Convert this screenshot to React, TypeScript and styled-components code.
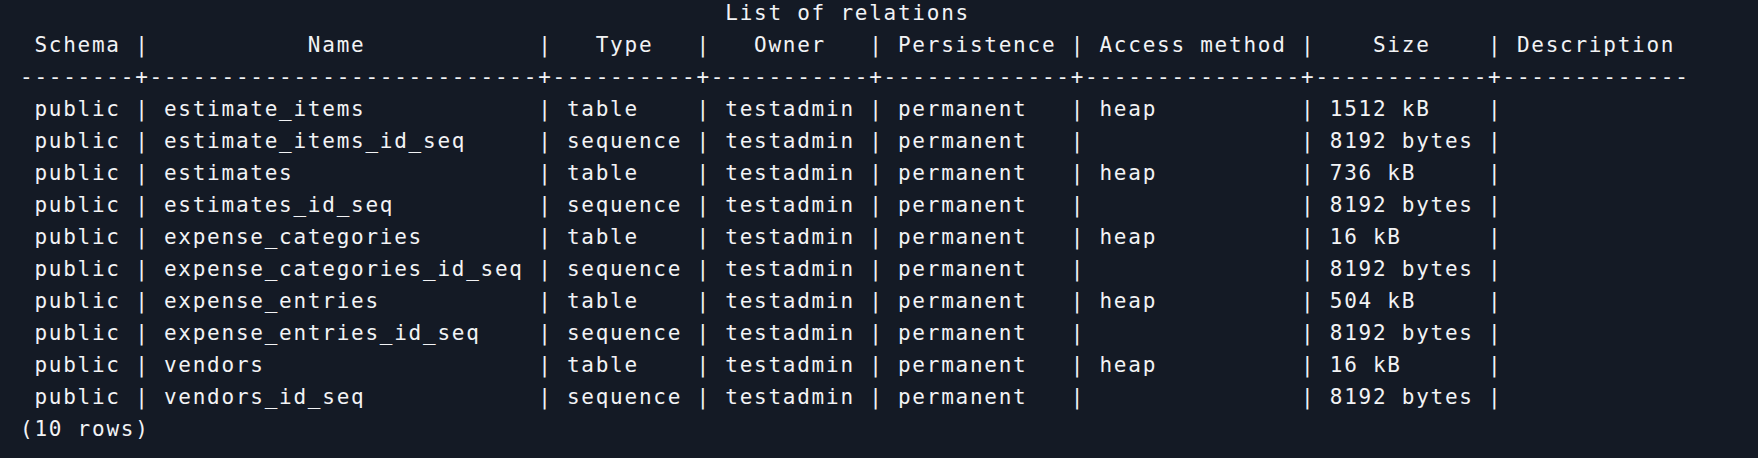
import React from "react";
import styled, { createGlobalStyle } from "styled-components";

const GlobalStyle = createGlobalStyle`
  html, body {
    margin: 0;
    padding: 0;
    background: #141a25;
  }
  body {
    width: 1758px;
    height: 458px;
    overflow: hidden;
  }
`;

const Terminal = styled.div`
  box-sizing: border-box;
  width: 1758px;
  height: 458px;
  background: #141a25;
  padding: 0 0 0 20px;
  overflow: hidden;
  font-family: "DejaVu Sans Mono", "Liberation Mono", monospace;
  font-size: 21px;
  letter-spacing: 1.75px;
  line-height: 32px;
  color: #f2f3f5;
`;

const Output = styled.div`
  display: flex;
  flex-direction: column;
  margin-top: -3px;
`;

const Line = styled.div`
  white-space: pre;
  height: 32px;
`;

const TitleLine = styled(Line)``;
const HeaderLine = styled(Line)``;
const DividerLine = styled(Line)``;
const RowLine = styled(Line)``;
const FooterLine = styled(Line)``;

type Col = { title: string; width: number };

const columns: Col[] = [
  { title: "Schema", width: 6 },
  { title: "Name", width: 25 },
  { title: "Type", width: 8 },
  { title: "Owner", width: 9 },
  { title: "Persistence", width: 11 },
  { title: "Access method", width: 13 },
  { title: "Size", width: 10 },
  { title: "Description", width: 11 },
];

type Rel = { name: string; type: string; method: string; size: string };

const relations: Rel[] = [
  { name: "estimate_items", type: "table", method: "heap", size: "1512 kB" },
  { name: "estimate_items_id_seq", type: "sequence", method: "", size: "8192 bytes" },
  { name: "estimates", type: "table", method: "heap", size: "736 kB" },
  { name: "estimates_id_seq", type: "sequence", method: "", size: "8192 bytes" },
  { name: "expense_categories", type: "table", method: "heap", size: "16 kB" },
  { name: "expense_categories_id_seq", type: "sequence", method: "", size: "8192 bytes" },
  { name: "expense_entries", type: "table", method: "heap", size: "504 kB" },
  { name: "expense_entries_id_seq", type: "sequence", method: "", size: "8192 bytes" },
  { name: "vendors", type: "table", method: "heap", size: "16 kB" },
  { name: "vendors_id_seq", type: "sequence", method: "", size: "8192 bytes" },
];

const center = (s: string, w: number) => {
  const left = Math.floor((w - s.length) / 2);
  return " ".repeat(left) + s + " ".repeat(w - s.length - left);
};

const totalWidth = columns.reduce((a, c) => a + c.width + 2, 0) + columns.length - 1;

const titleText = "List of relations";
const titleLine = " ".repeat(Math.floor((totalWidth - titleText.length) / 2)) + titleText;

const headerLine = columns
  .map((c, i) => {
    const cell = " " + center(c.title, c.width);
    return i === columns.length - 1 ? cell : cell + " ";
  })
  .join("|");

const dividerLine = columns.map((c) => "-".repeat(c.width + 2)).join("+");

const rowText = (r: Rel) => {
  const vals = ["public", r.name, r.type, "testadmin", "permanent", r.method, r.size, ""];
  return vals
    .map((v, i) => {
      const cell = " " + v.padEnd(columns[i].width, " ");
      return i === vals.length - 1 ? " " : cell + " ";
    })
    .join("|");
};

export default function App() {
  return (
    <>
      <GlobalStyle />
      <Terminal>
        <Output>
          <TitleLine>{titleLine}</TitleLine>
          <HeaderLine>{headerLine}</HeaderLine>
          <DividerLine>{dividerLine}</DividerLine>
          {relations.map((r) => (
            <RowLine key={r.name}>{rowText(r)}</RowLine>
          ))}
          <FooterLine>({relations.length} rows)</FooterLine>
        </Output>
      </Terminal>
    </>
  );
}
